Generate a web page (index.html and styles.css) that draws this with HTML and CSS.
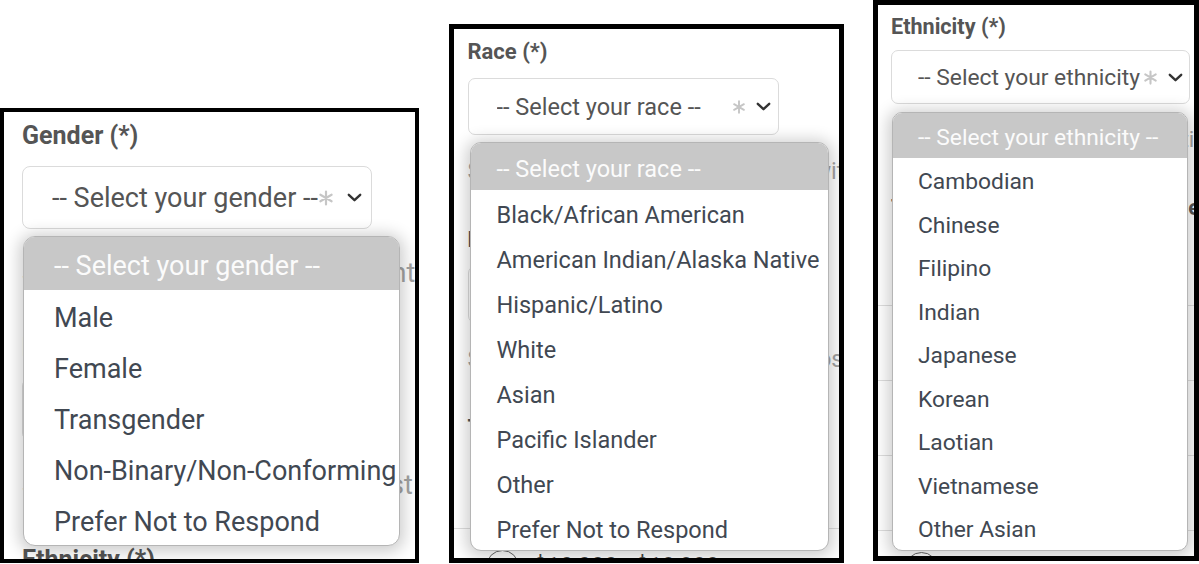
FILE: index.html
```html
<!DOCTYPE html>
<html lang="en">
<head>
<meta charset="utf-8">
<title>Demographic dropdowns</title>
<link rel="stylesheet" href="styles.css">
</head>
<body>
<main class="sheet">

  <section class="shot shot-gender">
    <form class="form">
      <div class="field">
        <div class="field-label">Gender (*)</div>
        <div class="select-wrap">
          <div class="select">
            <span class="select-value">-- Select your gender --</span>
            <svg class="req" viewBox="0 0 16 16"><path d="M8 1.5v13M2.4 4.75l11.2 6.5M13.6 4.75L2.4 11.25"/></svg>
            <svg class="caret" viewBox="0 0 15 9"><path d="M1.8 1.8L7.5 7.2L13.2 1.8"/></svg>
          </div>
          <ul class="dropdown">
            <li class="dropdown-head">-- Select your gender --</li>
            <li>Male</li>
            <li>Female</li>
            <li>Transgender</li>
            <li>Non-Binary/Non-Conforming</li>
            <li>Prefer Not to Respond</li>
          </ul>
        </div>
        <p class="field-help">Select the gender you most identify as an</p>
      </div>
      <div class="field">
        <div class="field-label">Race (*)</div>
        <div class="select-wrap">
          <div class="select">
            <span class="select-value">-- Select your race --</span>
            <svg class="req" viewBox="0 0 16 16"><path d="M8 1.5v13M2.4 4.75l11.2 6.5M13.6 4.75L2.4 11.25"/></svg>
            <svg class="caret" viewBox="0 0 15 9"><path d="M1.8 1.8L7.5 7.2L13.2 1.8"/></svg>
          </div>
        </div>
        <p class="field-help">Select the race you identify most with the</p>
      </div>
      <div class="field">
        <div class="field-label">Ethnicity (*)</div>
      </div>
    </form>
  </section>

  <section class="shot shot-race">
    <form class="form">
      <div class="field">
        <div class="field-label">Race (*)</div>
        <div class="select-wrap">
          <div class="select">
            <span class="select-value">-- Select your race --</span>
            <svg class="req" viewBox="0 0 16 16"><path d="M8 1.5v13M2.4 4.75l11.2 6.5M13.6 4.75L2.4 11.25"/></svg>
            <svg class="caret" viewBox="0 0 15 9"><path d="M1.8 1.8L7.5 7.2L13.2 1.8"/></svg>
          </div>
          <ul class="dropdown">
            <li class="dropdown-head">-- Select your race --</li>
            <li>Black/African American</li>
            <li>American Indian/Alaska Native</li>
            <li>Hispanic/Latino</li>
            <li>White</li>
            <li>Asian</li>
            <li>Pacific Islander</li>
            <li>Other</li>
            <li>Prefer Not to Respond</li>
          </ul>
        </div>
        <p class="field-help">Select the race you identify most with in</p>
      </div>
      <div class="field">
        <div class="field-label">Ethnicity (*)</div>
        <div class="select-wrap">
          <div class="select">
            <span class="select-value">-- Select your ethnicity --</span>
            <svg class="req" viewBox="0 0 16 16"><path d="M8 1.5v13M2.4 4.75l11.2 6.5M13.6 4.75L2.4 11.25"/></svg>
            <svg class="caret" viewBox="0 0 15 9"><path d="M1.8 1.8L7.5 7.2L13.2 1.8"/></svg>
          </div>
        </div>
        <p class="field-help">Select the ethnicity you identify most wit</p>
      </div>
      <div class="field">
        <div class="field-label">Total Annual Household Income (*)</div>
        <div class="radio-list">
          <div class="radio-row"><span class="radio"></span><span>Less than $10,000</span></div>
          <div class="radio-row"><span class="radio"></span><span>$10,000 - $19,999</span></div>
        </div>
      </div>
    </form>
  </section>

  <section class="shot shot-ethnicity">
    <form class="form">
      <div class="field">
        <div class="field-label">Ethnicity (*)</div>
        <div class="select-wrap">
          <div class="select">
            <span class="select-value">-- Select your ethnicity --</span>
            <svg class="req" viewBox="0 0 16 16"><path d="M8 1.5v13M2.4 4.75l11.2 6.5M13.6 4.75L2.4 11.25"/></svg>
            <svg class="caret" viewBox="0 0 15 9"><path d="M1.8 1.8L7.5 7.2L13.2 1.8"/></svg>
          </div>
          <ul class="dropdown">
            <li class="dropdown-head">-- Select your ethnicity --</li>
            <li>Cambodian</li>
            <li>Chinese</li>
            <li>Filipino</li>
            <li>Indian</li>
            <li>Japanese</li>
            <li>Korean</li>
            <li>Laotian</li>
            <li>Vietnamese</li>
            <li>Other Asian</li>
          </ul>
        </div>
        <p class="field-help">(Select the ethnicity you identify with)</p>
      </div>
      <div class="field">
        <div class="field-label">Total Annual Household Income (*)</div>
        <div class="radio-list">
          <div class="radio-row"><span class="radio"></span><span>Less than $10,000</span></div>
          <div class="radio-row"><span class="radio"></span><span>$10,000 - $19,999</span></div>
          <div class="radio-row"><span class="radio"></span><span>$20,000 - $29,999</span></div>
          <div class="radio-row"><span class="radio"></span><span>$30,000 - $39,999</span></div>
          <div class="radio-row"><span class="radio"></span><span>$40,000 - $49,999</span></div>
        </div>
      </div>
    </form>
  </section>

</main>
</body>
</html>
```

FILE: styles.css
```css
* {
  box-sizing: border-box;
  margin: 0;
  padding: 0;
}

html,
body {
  width: 1199px;
  height: 564px;
  overflow: hidden;
  background: #fff;
}

body {
  font-family: Roboto, "Noto Sans", "Liberation Sans", sans-serif;
  color: #555;
}

.sheet {
  display: flex;
  justify-content: space-between;
  align-items: flex-start;
  width: 1199px;
  height: 564px;
}

/* each screenshot panel */
.shot {
  flex: none;
  width: var(--w);
  height: var(--h);
  margin-top: var(--top);
  border: var(--bw) solid #000;
  background: #fff;
  overflow: hidden;
  font-size: var(--fs);
}

.shot-gender {
  --w: 419px;
  --h: 455px;
  --top: 108px;
  --bw: 4px;
  --fs: 27px;
  --pt: 9px;
  --pl: 18px;
  --lfs: 25px;
  --llh: 30px;
  --sel-gap: 15px;
  --sel-w: 350px;
  --sel-h: 63px;
  --sel-r: 8px;
  --sel-pl: 29px;
  --sel-pr: 9px;
  --req: 16px;
  --icon-gap: 13px;
  --dd-x: 1px;
  --dd-y: 7px;
  --dd-w: 377px;
  --dd-r: 12px;
  --head-h: 53px;
  --item-h: 51px;
  --dd-pl: 30px;
  --help-mt: 28px;
  --help-lh: 32px;
  --field-gap: 44px;
  --list-mt: 12px;
  --row-h: 75px;
  --radio-pl: 18px;
}

.shot-race {
  --w: 395px;
  --h: 539px;
  --top: 24px;
  --bw: 5px;
  --fs: 23.5px;
  --pt: 10px;
  --pl: 14px;
  --lfs: 22px;
  --llh: 26px;
  --sel-gap: 13px;
  --sel-w: 311px;
  --sel-h: 57px;
  --sel-r: 7px;
  --sel-pl: 28px;
  --sel-pr: 7px;
  --req: 14px;
  --icon-gap: 10px;
  --dd-x: 2px;
  --dd-y: 7px;
  --dd-w: 359px;
  --dd-r: 11px;
  --head-h: 47px;
  --item-h: 45px;
  --dd-pl: 26px;
  --help-mt: 22px;
  --help-lh: 28px;
  --field-gap: 42px;
  --list-mt: 12px;
  --row-h: 75px;
  --radio-pl: 18px;
}

.shot-ethnicity {
  --w: 326px;
  --h: 561px;
  --top: 0px;
  --bw: 5px;
  --fs: 22.8px;
  --pt: 9px;
  --pl: 13px;
  --lfs: 21.6px;
  --llh: 25px;
  --sel-gap: 11px;
  --sel-w: 299px;
  --sel-h: 54px;
  --sel-r: 7px;
  --sel-pl: 26px;
  --sel-pr: 6px;
  --req: 15px;
  --icon-gap: 10px;
  --dd-x: 1px;
  --dd-y: 8px;
  --dd-w: 296px;
  --dd-r: 10px;
  --head-h: 45px;
  --item-h: 43.5px;
  --dd-pl: 25px;
  --help-mt: 22px;
  --help-lh: 27px;
  --field-gap: 42px;
  --list-mt: 10px;
  --row-h: 75px;
  --radio-pl: 14px;
}

.form {
  display: flex;
  flex-direction: column;
  padding: var(--pt) 0 0 var(--pl);
}

.field + .field {
  margin-top: var(--field-gap);
}

.field-label {
  font-size: var(--lfs);
  line-height: var(--llh);
  font-weight: 700;
  color: #555;
  white-space: nowrap;
}

.select-wrap {
  position: relative;
  width: var(--sel-w);
  margin-top: var(--sel-gap);
}

.select {
  display: flex;
  align-items: center;
  height: var(--sel-h);
  padding: 0 var(--sel-pr) 0 var(--sel-pl);
  border: 1px solid #dbdbdb;
  border-radius: var(--sel-r);
  background: #fff;
  color: #555;
}

.select-value {
  flex: 1;
  min-width: 0;
  overflow: hidden;
  white-space: nowrap;
}

.req {
  flex: none;
  width: var(--req);
  height: var(--req);
}

.req path {
  fill: none;
  stroke: #c6c6c6;
  stroke-width: 2.2;
  stroke-linecap: round;
}

.caret {
  flex: none;
  width: 15px;
  height: 9px;
  margin-left: var(--icon-gap);
}

.caret path {
  fill: none;
  stroke: #333;
  stroke-width: 2.4;
  stroke-linecap: round;
  stroke-linejoin: round;
}

/* open native-style option list */
.dropdown {
  position: absolute;
  z-index: 5;
  left: var(--dd-x);
  top: calc(100% + var(--dd-y));
  width: var(--dd-w);
  list-style: none;
  background: #fff;
  border: 1px solid #b5b5b5;
  border-radius: var(--dd-r);
  box-shadow: 0 2px 16px 4px rgba(0, 0, 0, 0.2);
  overflow: hidden;
}

.dropdown li {
  display: flex;
  align-items: center;
  height: var(--item-h);
  padding-top: 4px;
  padding-left: var(--dd-pl);
  color: #414852;
  white-space: nowrap;
}

.dropdown .dropdown-head {
  height: var(--head-h);
  background: #c8c8c8;
  color: #fbfbfb;
}

.field-help {
  margin-top: var(--help-mt);
  line-height: var(--help-lh);
  color: #a3a3a3;
  white-space: nowrap;
}

.radio-list {
  margin-top: var(--list-mt);
  margin-left: calc(-1 * var(--pl));
  width: calc(100% + var(--pl));
}

.radio-row {
  display: flex;
  align-items: center;
  gap: 15px;
  height: var(--row-h);
  padding-left: calc(var(--pl) + var(--radio-pl));
  color: #444;
  white-space: nowrap;
}

.radio-row + .radio-row {
  border-top: 1px solid #dedede;
}

.radio {
  flex: none;
  width: 33px;
  height: 33px;
  border: 1.5px solid #666;
  border-radius: 50%;
}
```
